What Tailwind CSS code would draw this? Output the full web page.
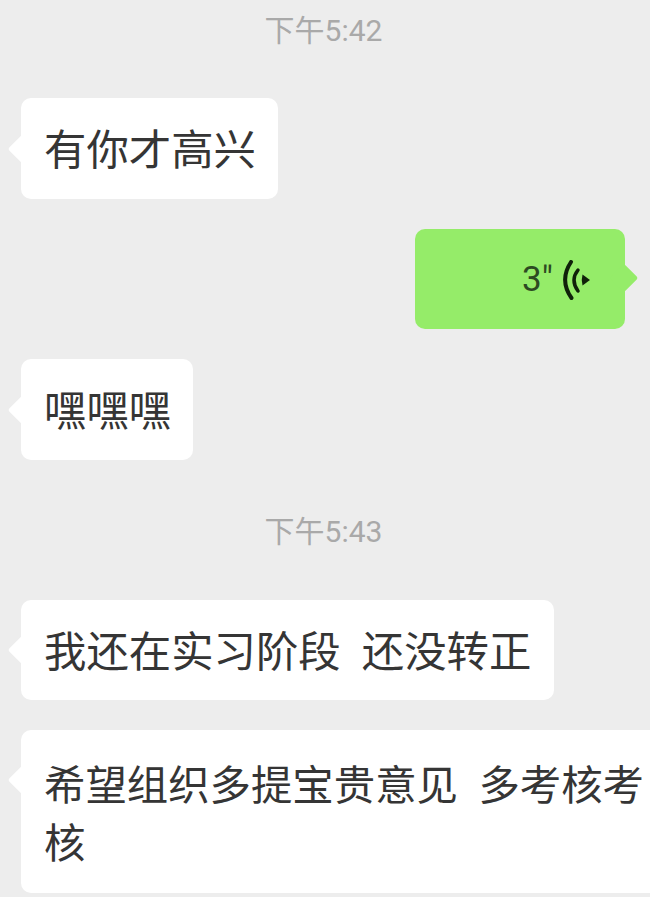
<!DOCTYPE html>
<html lang="zh-CN">
<head>
    <meta charset="UTF-8">
    <meta name="viewport" content="width=device-width, initial-scale=1.0">
    <title>Chat</title>
    <script src="https://cdn.jsdelivr.net/npm/@tailwindcss/browser@4"></script>
</head>
<body class="h-[897px] overflow-hidden bg-[#ededed] font-['Roboto','Noto_Sans_CJK_SC',sans-serif] text-[42.4px] text-[#353535]">
    <main class="flex flex-col pl-[21px]">
        <!-- 5:42 -->
        <div class="-ml-[24px] flex h-[60px] items-center justify-center text-[30px] text-[#a9a9a9]">下午5:42</div>

        <div class="relative mt-[38px] flex h-[101px] w-[257px] items-center rounded-[10px] bg-white pl-[23px] pt-[5px]">
            <span class="absolute -left-[9px] top-[41px] size-[20px] rotate-45 rounded-[2px] bg-white"></span>
            <span class="relative">有你才高兴</span>
        </div>

        <!-- voice message -->
        <div class="relative mt-[30px] ml-[394px] flex h-[100px] w-[210px] items-center justify-end gap-[8px] rounded-[10px] bg-[#95ec69] pr-[34px] pt-[2px]">
            <span class="absolute -right-[9px] top-[39px] size-[20px] rotate-45 rounded-[2px] bg-[#95ec69]"></span>
            <span class="relative text-[35px] text-[#2d4a22]">3"</span>
            <svg class="relative" width="30" height="40" viewBox="0 0 30 40" fill="none" stroke="#10210a" stroke-linecap="round">
                <path d="M10 2 Q-2 20 10.500 38" stroke-width="4"/>
                <path d="M17 10 Q9 20 17 31" stroke-width="3.500"/>
                <path d="M21.500 14.500 L29 20 L21.500 25.500 Q20 20 21.500 14.500 Z" fill="#10210a" stroke="none"/>
            </svg>
        </div>

        <div class="relative mt-[30px] flex h-[101px] w-[172px] items-center rounded-[10px] bg-white pl-[23px] pt-[5px]">
            <span class="absolute -left-[9px] top-[41px] size-[20px] rotate-45 rounded-[2px] bg-white"></span>
            <span class="relative">嘿嘿嘿</span>
        </div>

        <!-- 5:43 -->
        <div class="-ml-[24px] mt-[41px] flex h-[60px] items-center justify-center text-[30px] text-[#a9a9a9]">下午5:43</div>

        <div class="relative mt-[39px] flex h-[100px] w-[533px] items-center rounded-[10px] bg-white pl-[23px] pt-[5px]">
            <span class="absolute -left-[9px] top-[40px] size-[20px] rotate-45 rounded-[2px] bg-white"></span>
            <span class="relative whitespace-pre">我还在实习阶段&nbsp;&nbsp;还没转正</span>
        </div>

        <div class="relative mt-[30px] h-[163px] w-[660px] rounded-[10px] bg-white pl-[23px] pt-[27px] text-[41.400px] leading-[58px]">
            <span class="absolute -left-[9px] top-[40px] size-[20px] rotate-45 rounded-[2px] bg-white"></span>
            <p class="relative">希望组织多提宝贵意见&nbsp;&nbsp;多考核考<br>核</p>
        </div>
    </main>
</body>
</html>
